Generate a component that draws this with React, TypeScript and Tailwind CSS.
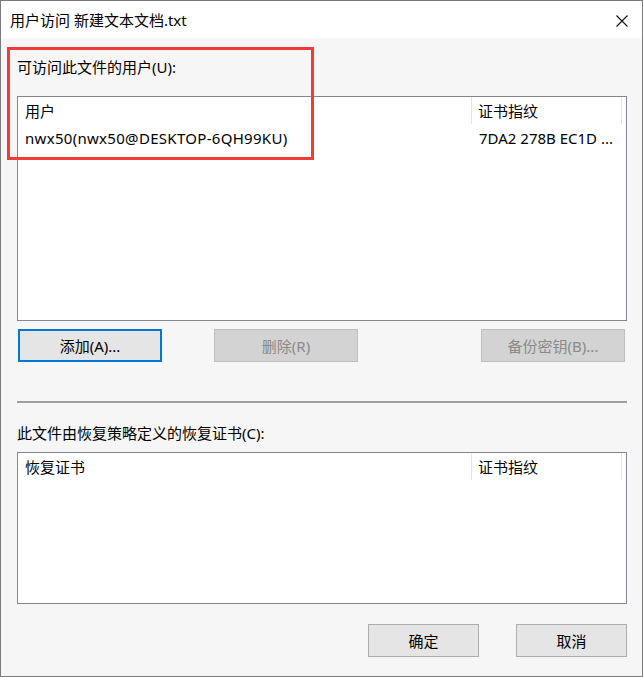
import React from "react";

const FONT = {
  fontFamily: '"Segoe UI", "Noto Sans", "Noto Sans CJK SC", sans-serif',
};

function Btn({
  children,
  w,
  disabled,
  focused,
}: {
  children: React.ReactNode;
  w: string;
  disabled?: boolean;
  focused?: boolean;
}) {
  let cls = "h-[33px] flex items-center justify-center text-[15px] leading-[20px] ";
  if (focused) cls += "border-2 border-[#0078d7] bg-[#e5e5e5] text-black ";
  else if (disabled) cls += "border border-[#bfbfbf] bg-[#d3d3d3] text-[#8a8a8a] ";
  else cls += "border border-[#adadad] bg-[#e5e5e5] text-black ";
  return <div className={cls + w}>{children}</div>;
}

function ListBox({
  col1,
  rows,
  h,
}: {
  col1: string;
  rows: [string, string][];
  h: string;
}) {
  return (
    <div className={"w-[610px] border border-[#828790] bg-white flex flex-col " + h}>
      <div className="flex h-[27px] text-[15px] leading-[20px]">
        <div className="w-[454px] border-r border-[#e5e5e5] pl-[7px] flex items-center">
          {col1}
        </div>
        <div className="w-[150px] border-r border-[#e5e5e5] pl-[6px] flex items-center">
          证书指纹
        </div>
      </div>
      {rows.map((r, i) => (
        <div key={i} className="flex h-[28px] text-[15px] leading-[20px]">
          <div className="w-[455px] pl-[7px] flex items-center tracking-[0.3px]">{r[0]}</div>
          <div className="w-[150px] pl-[6px] flex items-center whitespace-nowrap">{r[1]}</div>
        </div>
      ))}
    </div>
  );
}

export default function App() {
  return (
    <div
      className="relative w-[643px] h-[677px] border border-[#7a7a7a] bg-[#f6f6f6] flex flex-col text-black overflow-hidden"
      style={FONT}
    >
      {/* Title bar */}
      <div className="h-[37px] bg-white flex items-center justify-between pl-[9px] pr-[14px] shrink-0">
        <div className="text-[15px] leading-[20px] mt-[1px]">用户访问 新建文本文档.txt</div>
        <svg width="12" height="12" viewBox="0 0 12 12" className="mt-[2px]">
          <path d="M0.5 0.5 L11.5 11.5 M11.5 0.5 L0.5 11.5" stroke="#111" strokeWidth="1.1" fill="none" />
        </svg>
      </div>

      {/* Content */}
      <div className="flex flex-col pl-[16px] pr-[14px]">
        <div className="mt-[19px] text-[15px] leading-[20px]">可访问此文件的用户(U):</div>
        <div className="mt-[19px]">
          <ListBox
            col1="用户"
            rows={[["nwx50(nwx50@DESKTOP-6QH99KU)", "7DA2 278B EC1D ..."]]}
            h="h-[225px]"
          />
        </div>
        <div className="mt-[8px] flex w-[610px]">
          <div className="ml-[1px]">
            <Btn w="w-[144px]" focused>
              添加(A)...
            </Btn>
          </div>
          <div className="ml-[52px]">
            <Btn w="w-[144px]" disabled>
              删除(R)
            </Btn>
          </div>
          <div className="ml-auto mr-[2px]">
            <Btn w="w-[144px]" disabled>
              备份密钥(B)...
            </Btn>
          </div>
        </div>
        <div className="mt-[39px] w-[610px] border-t-2 border-[#a0a0a0]" />
        <div className="mt-[20px] text-[15px] leading-[20px]">此文件由恢复策略定义的恢复证书(C):</div>
        <div className="mt-[9px]">
          <ListBox col1="恢复证书" rows={[]} h="h-[152px]" />
        </div>
        <div className="mt-[20px] flex w-[610px] justify-end">
          <Btn w="w-[111px]">确定</Btn>
          <div className="ml-[37px] mr-[0px]">
            <Btn w="w-[111px]">取消</Btn>
          </div>
        </div>
      </div>

      {/* Red annotation box */}
      <div className="absolute left-[6px] top-[46px] w-[307px] h-[113px] border-[3px] border-[#f23a3a] pointer-events-none" />
    </div>
  );
}
